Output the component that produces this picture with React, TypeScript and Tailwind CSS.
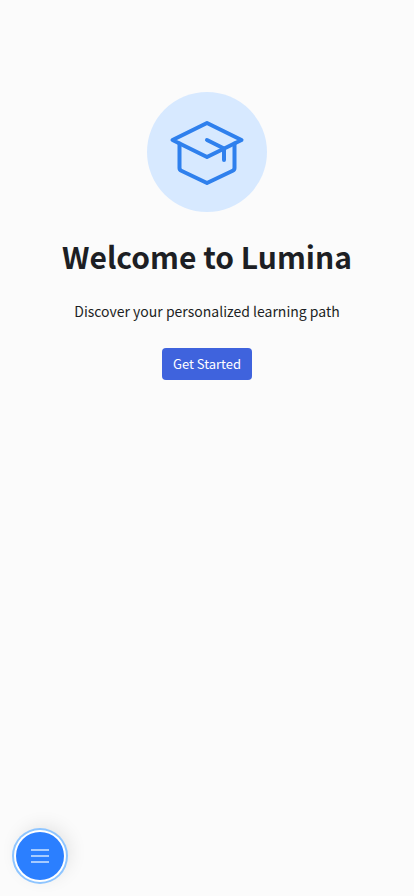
function CapIcon() {
  return (
    <svg
      width="80"
      height="80"
      viewBox="0 0 80 80"
      fill="none"
      stroke="#2f80ed"
      strokeWidth="4"
      strokeLinecap="round"
      strokeLinejoin="round"
      aria-hidden="true"
    >
      <path d="M40 11 74.500 28 40 45 5.500 28Z" />
      <path d="M12.500 31.500V56c0 1.300.7 2.200 1.800 2.700L40 71l25.700-12.300c1.100-.5 1.800-1.400 1.800-2.700V31.500" />
      <path d="M40 28 57 36.500V48" />
    </svg>
  );
}

export default function App() {
  return (
    <div className="min-h-screen bg-[#fbfbfb] font-['Noto_Sans_CJK_SC',sans-serif] text-[#1d1f24]">
      <main className="flex flex-col items-center px-6 pt-23 text-center">
        <div className="flex size-30 items-center justify-center rounded-full bg-[#d7e9ff]">
          <CapIcon />
        </div>
        <h1 className="mt-6 text-3xl leading-10 font-bold">Welcome to Lumina</h1>
        <p className="mt-6 text-sm leading-[22px]">Discover your personalized learning path</p>
        <button
          type="button"
          className="mt-[26px] h-8 rounded bg-[#3f63dd] px-[11px] text-[13px] leading-5 text-white"
        >
          Get Started
        </button>
      </main>
      <button
        type="button"
        aria-label="Open menu"
        className="fixed bottom-4 left-4 flex size-12 items-center justify-center rounded-full bg-[#2b7fff] shadow-[0_0_0_2px_#fff,0_0_0_4px_#8ec5ff,4px_-4px_20px_rgba(0,0,0,0.12)]"
      >
        <svg width="20" height="20" viewBox="0 0 20 20" stroke="#a6cbff" strokeWidth="2" aria-hidden="true">
          <path d="M1 4h18M1 10h18M1 16h18" />
        </svg>
      </button>
    </div>
  );
}
